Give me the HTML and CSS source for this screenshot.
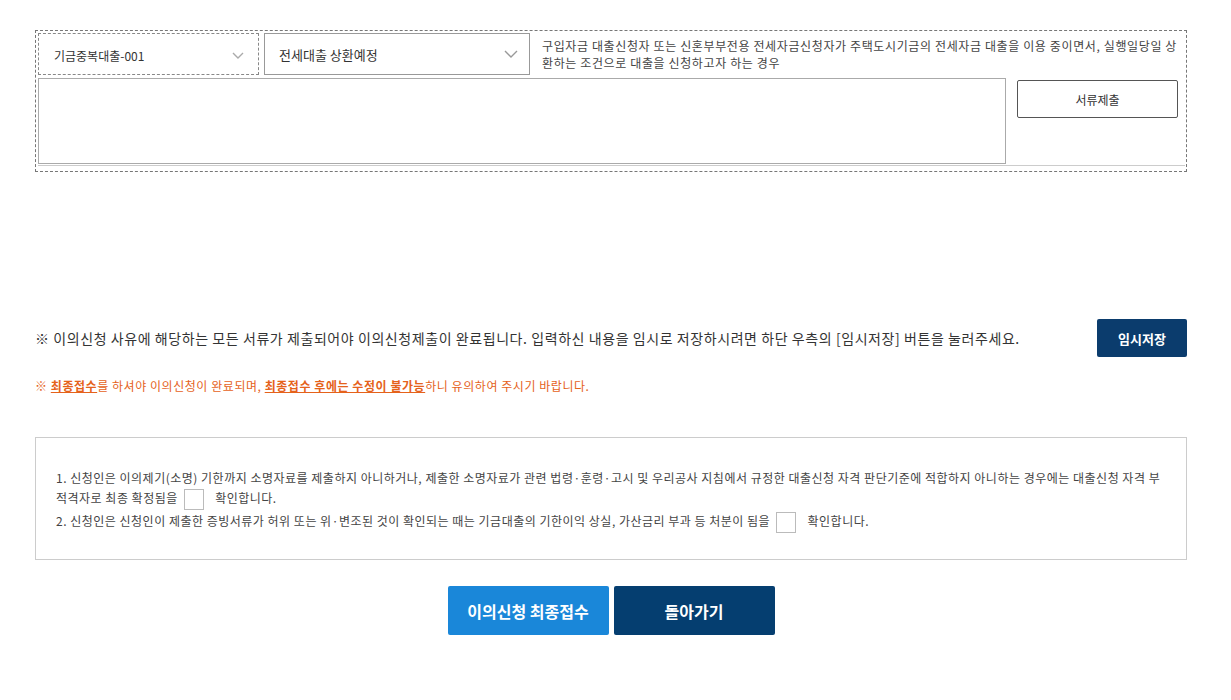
FILE: index.html
```html
<html>
    <head>
        <title>이의신청</title>
        <meta charset="utf-8">
        <link rel="stylesheet" href="styles.css">
    </head>

    <body>
        <div class="content">
            <div class="doc-box">
                <div class="doc-top">
                    <div class="select-dashed">
                        <span>기금중복대출-001</span>
                        <svg class="chevron" width="12" height="7" viewBox="0 0 12 7"><path d="M1 1 L6 6 L11 1" fill="none" stroke="#aaa" stroke-width="1.4"/></svg>
                    </div>
                    <div class="select-solid">
                        <span>전세대출 상환예정</span>
                        <svg class="chevron" width="14" height="8" viewBox="0 0 14 8"><path d="M1 1 L7 7 L13 1" fill="none" stroke="#999" stroke-width="1.4"/></svg>
                    </div>
                    <p class="doc-desc">구입자금 대출신청자 또는 신혼부부전용 전세자금신청자가 주택도시기금의 전세자금 대출을 이용 중이면서, 실행일당일 상환하는 조건으로 대출을 신청하고자 하는 경우</p>
                </div>
                <div class="doc-row">
                    <div class="doc-area"></div>
                    <div class="doc-side">
                        <button class="btn-line">서류제출</button>
                    </div>
                </div>
            </div>

            <div class="notice-row">
                <p class="notice">※ 이의신청 사유에 해당하는 모든 서류가 제출되어야 이의신청제출이 완료됩니다. 입력하신 내용을 임시로 저장하시려면 하단 우측의 [임시저장] 버튼을 눌러주세요.</p>
                <button class="btn-save">임시저장</button>
            </div>

            <p class="warn">※ <u>최종접수</u>를 하셔야 이의신청이 완료되며, <u>최종접수 후에는 수정이 불가능</u>하니 유의하여 주시기 바랍니다.</p>

            <div class="agree-box">
                <p>1. 신청인은 이의제기(소명) 기한까지 소명자료를 제출하지 아니하거나, 제출한 소명자료가 관련 법령·훈령·고시 및 우리공사 지침에서 규정한 대출신청 자격 판단기준에 적합하지 아니하는 경우에는 대출신청 자격 부적격자로 최종 확정됨을 <span class="check"></span> 확인합니다.</p>
                <p>2. 신청인은 신청인이 제출한 증빙서류가 허위 또는 위·변조된 것이 확인되는 때는 기금대출의 기한이익 상실, 가산금리 부과 등 처분이 됨을 <span class="check"></span> 확인합니다.</p>
            </div>

            <div class="btn-row">
                <button class="btn-big btn-blue">이의신청 최종접수</button>
                <button class="btn-big btn-navy">돌아가기</button>
            </div>
        </div>
    </body>
</html>
```

FILE: styles.css
```css
body{
    margin: 0;
    font-family: "Noto Sans CJK KR", "Noto Sans", sans-serif;
    color: #333;
    background: #fff;
}

p{
    margin: 0;
}

.content{
    width: 1152px;
    margin: 0 0 0 35px;
    padding-top: 30px;
}

.doc-box{
    border: 1px dashed #777;
    padding: 2px 1px 5px 2px;
}

.doc-top{
    display: flex;
    align-items: flex-start;
}

.select-dashed,
.select-solid{
    display: flex;
    align-items: center;
    justify-content: space-between;
    box-sizing: border-box;
    height: 42px;
    font-size: 12px;
    color: #333;
}

.select-dashed{
    width: 221px;
    border: 1px dashed #888;
    padding: 2px 14px 0 15px;
}

.select-solid{
    width: 266px;
    margin-left: 5px;
    border: 1px solid #999;
    padding: 0 11px 0 14px;
    font-size: 13px;
}

.doc-desc{
    flex: 1;
    margin: 4px 0 0 12px;
    font-size: 12px;
    line-height: 17px;
    letter-spacing: 0.62px;
    color: #444;
}

.doc-row{
    display: flex;
    margin-top: 3px;
    padding-bottom: 1px;
    border-bottom: 1px solid #ccc;
}

.doc-area{
    box-sizing: border-box;
    width: 968px;
    height: 86px;
    border: 1px solid #aaa;
}

.doc-side{
    flex: 1;
    padding: 2px 0 0 11px;
}

.btn-line{
    width: 161px;
    height: 38px;
    background: #fff;
    border: 1px solid #555;
    border-radius: 2px;
    font-family: inherit;
    font-size: 12px;
    color: #333;
}

.notice-row{
    display: flex;
    align-items: center;
    justify-content: space-between;
    margin-top: 147px;
}

.notice{
    font-size: 14px;
    letter-spacing: 0.57px;
    color: #333;
}

.btn-save{
    width: 90px;
    height: 38px;
    border: 0;
    border-radius: 2px;
    background: #0b3c6d;
    color: #fff;
    font-family: inherit;
    font-size: 13px;
    font-weight: bold;
}

.warn{
    margin-top: 20px;
    font-size: 12px;
    letter-spacing: 0.55px;
    color: #e5621b;
}

.warn u{
    font-weight: bold;
}

.agree-box{
    margin-top: 43px;
    border: 1px solid #ccc;
    padding: 30px 20px 26px 20px;
    font-size: 12px;
    line-height: 20px;
    letter-spacing: 0.5px;
    color: #444;
}

.agree-box p + p{
    margin-top: 1px;
}

.check{
    display: inline-block;
    width: 20px;
    height: 21px;
    margin: 0 8px 0 3px;
    border: 1px solid #bbb;
    vertical-align: middle;
    box-sizing: border-box;
}

.btn-row{
    display: flex;
    justify-content: center;
    gap: 5px;
    margin-top: 26px;
}

.btn-big{
    width: 161px;
    height: 49px;
    border: 0;
    border-radius: 2px;
    color: #fff;
    font-family: inherit;
    font-size: 16px;
    font-weight: bold;
}

.btn-blue{
    background: #1a87d9;
}

.btn-navy{
    background: #053e70;
}
```
